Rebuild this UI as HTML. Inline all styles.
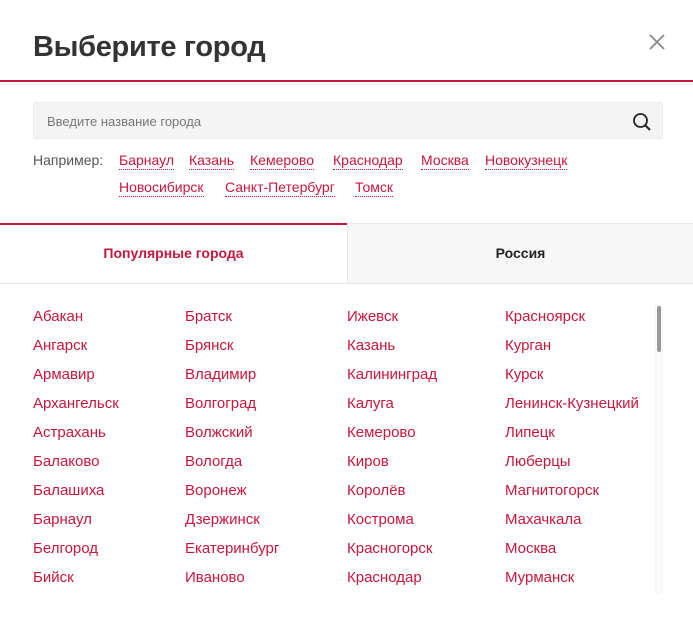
<!DOCTYPE html>
<html><head><meta charset="utf-8"><style>
*{margin:0;padding:0;box-sizing:border-box}
body{width:693px;height:618px;background:#fff;font-family:"Liberation Sans","DejaVu Sans",sans-serif;position:relative;overflow:hidden}
.title{position:absolute;left:33px;top:31px;font-size:29px;font-weight:bold;color:#333;letter-spacing:-0.3px}
.close{position:absolute;left:649px;top:34px}
.rl{position:absolute;left:0;top:80px;width:693px;height:2px;background:#c8173c}
.search{position:absolute;left:33px;top:102px;width:630px;height:37px;background:#f4f4f4;border:1px solid #ececec;border-radius:2px}
.search span{position:absolute;left:13px;top:11px;font-size:13px;color:#777}
.search svg{position:absolute;right:10px;top:9px}
.ex{position:absolute;font-size:14px;color:#555}
.ex a,.lnk{color:#c8173c;text-decoration:none;border-bottom:1px dotted #c8173c;position:absolute;font-size:14px;white-space:nowrap;line-height:17px}
.tabL{position:absolute;left:0;top:223px;width:347px;height:61px;border-top:2px solid #c8173c;border-bottom:1px solid #e5e5e5;text-align:center;font-weight:bold;font-size:14px;color:#c8173c;line-height:57px}
.tabR{position:absolute;left:347px;top:223px;width:346px;height:61px;background:#f7f7f7;border-top:1px solid #e8e8e8;border-left:1px solid #e5e5e5;border-bottom:1px solid #e5e5e5;text-align:center;font-weight:bold;font-size:14px;color:#222;line-height:58px}
.c{position:absolute;font-size:15px;color:#c8173c;white-space:nowrap}
.sb{position:absolute;left:655px;top:305px;width:8px;height:289px;border-radius:4px;background:#fafafa;box-shadow:inset 0 0 1px #ddd}
.th{position:absolute;left:657px;top:306px;width:4px;height:46px;border-radius:2px;background:#999}
</style></head><body>
<div class="title">Выберите город</div>
<svg class="close" width="16" height="16" viewBox="0 0 16 16"><path d="M1 1L15 15M15 1L1 15" stroke="#888" stroke-width="1.8"/></svg>
<div class="rl"></div>
<div class="search"><span>Введите название города</span>
<svg width="20" height="20" viewBox="0 0 20 20"><circle cx="8.5" cy="8.5" r="6.5" fill="none" stroke="#222" stroke-width="1.8"/><path d="M13 13L18 18" stroke="#222" stroke-width="2"/></svg></div>
<div class="ex" style="left:33px;top:152px">Например:</div>
<a class="lnk" style="left:119px;top:152px">Барнаул</a>
<a class="lnk" style="left:189px;top:152px">Казань</a>
<a class="lnk" style="left:250px;top:152px">Кемерово</a>
<a class="lnk" style="left:333px;top:152px">Краснодар</a>
<a class="lnk" style="left:421px;top:152px">Москва</a>
<a class="lnk" style="left:485px;top:152px">Новокузнецк</a>
<a class="lnk" style="left:119px;top:179px">Новосибирск</a>
<a class="lnk" style="left:225px;top:179px">Санкт-Петербург</a>
<a class="lnk" style="left:355px;top:179px">Томск</a>
<div class="tabL">Популярные города</div>
<div class="tabR">Россия</div>
<div id="list"></div>
<div class="sb"></div><div class="th"></div>
<script>
var cols=[[33,"Абакан Ангарск Армавир Архангельск Астрахань Балаково Балашиха Барнаул Белгород Бийск"],[185,"Братск Брянск Владимир Волгоград Волжский Вологда Воронеж Дзержинск Екатеринбург Иваново"],[347,"Ижевск Казань Калининград Калуга Кемерово Киров Королёв Кострома Красногорск Краснодар"],[505,"Красноярск Курган Курск Ленинск-Кузнецкий Липецк Люберцы Магнитогорск Махачкала Москва Мурманск"]];
var h="";cols.forEach(function(c){c[1].split(" ").forEach(function(n,i){h+='<div class="c" style="left:'+c[0]+'px;top:'+(308+i*29)+'px">'+n+'</div>';});});
document.getElementById("list").innerHTML=h;
</script>
</body></html>
